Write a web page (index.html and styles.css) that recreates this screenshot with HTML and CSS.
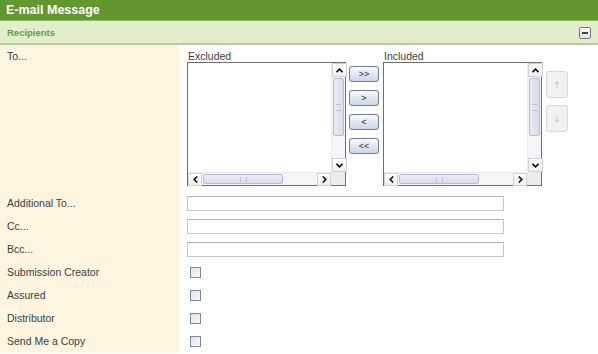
FILE: index.html
```html
<!DOCTYPE html>
<html lang="en">
<head>
    <meta charset="UTF-8">
    <meta name="viewport" content="width=device-width, initial-scale=1.0">
    <title>E-mail Message</title>
    <link rel="stylesheet" href="styles.css">
</head>
<body>
    <div id="panel">
        <div id="panel-title">E-mail Message</div>
        <div id="section-head">
            <span>Recipients</span>
            <button class="collapse"><span></span></button>
        </div>
        <div id="form">
            <div class="row row-to">
                <div class="label">To...</div>
                <div class="field picker">
                    <div class="list-col">
                        <div class="list-title">Excluded</div>
                        <div class="listbox">
                            <div class="list-body"></div>
                            <div class="vscroll">
                                <div class="sb-btn"><svg width="7" height="5" viewBox="0 0 7 5"><path d="M0.5 4.2 L3.5 1.2 L6.5 4.2" fill="none" stroke="#111" stroke-width="1.6"/></svg></div>
                                <div class="sb-track"><div class="vthumb"><i></i></div></div>
                                <div class="sb-btn"><svg width="7" height="5" viewBox="0 0 7 5"><path d="M0.5 0.8 L3.5 3.8 L6.5 0.8" fill="none" stroke="#111" stroke-width="1.6"/></svg></div>
                            </div>
                            <div class="hscroll">
                                <div class="sb-btn"><svg width="5" height="7" viewBox="0 0 5 7"><path d="M4.2 0.5 L1.2 3.5 L4.2 6.5" fill="none" stroke="#111" stroke-width="1.6"/></svg></div>
                                <div class="sb-track"><div class="hthumb"><i></i></div></div>
                                <div class="sb-btn"><svg width="5" height="7" viewBox="0 0 5 7"><path d="M0.8 0.5 L3.8 3.5 L0.8 6.5" fill="none" stroke="#111" stroke-width="1.6"/></svg></div>
                            </div>
                            <div class="corner"></div>
                        </div>
                    </div>
                    <div class="move-buttons">
                        <button class="move">&gt;&gt;</button>
                        <button class="move">&gt;</button>
                        <button class="move">&lt;</button>
                        <button class="move">&lt;&lt;</button>
                    </div>
                    <div class="list-col">
                        <div class="list-title">Included</div>
                        <div class="listbox">
                            <div class="list-body"></div>
                            <div class="vscroll">
                                <div class="sb-btn"><svg width="7" height="5" viewBox="0 0 7 5"><path d="M0.5 4.2 L3.5 1.2 L6.5 4.2" fill="none" stroke="#111" stroke-width="1.6"/></svg></div>
                                <div class="sb-track"><div class="vthumb"><i></i></div></div>
                                <div class="sb-btn"><svg width="7" height="5" viewBox="0 0 7 5"><path d="M0.5 0.8 L3.5 3.8 L6.5 0.8" fill="none" stroke="#111" stroke-width="1.6"/></svg></div>
                            </div>
                            <div class="hscroll">
                                <div class="sb-btn"><svg width="5" height="7" viewBox="0 0 5 7"><path d="M4.2 0.5 L1.2 3.5 L4.2 6.5" fill="none" stroke="#111" stroke-width="1.6"/></svg></div>
                                <div class="sb-track"><div class="hthumb"><i></i></div></div>
                                <div class="sb-btn"><svg width="5" height="7" viewBox="0 0 5 7"><path d="M0.8 0.5 L3.8 3.5 L0.8 6.5" fill="none" stroke="#111" stroke-width="1.6"/></svg></div>
                            </div>
                            <div class="corner"></div>
                        </div>
                    </div>
                    <div class="order-buttons">
                        <button class="order" disabled>&uarr;</button>
                        <button class="order" disabled>&darr;</button>
                    </div>
                </div>
            </div>
            <div class="row">
                <div class="label">Additional To...</div>
                <div class="field"><input type="text" class="text-input"></div>
            </div>
            <div class="row">
                <div class="label">Cc...</div>
                <div class="field"><input type="text" class="text-input"></div>
            </div>
            <div class="row">
                <div class="label">Bcc...</div>
                <div class="field"><input type="text" class="text-input"></div>
            </div>
            <div class="row">
                <div class="label">Submission Creator</div>
                <div class="field"><span class="check"></span></div>
            </div>
            <div class="row">
                <div class="label">Assured</div>
                <div class="field"><span class="check"></span></div>
            </div>
            <div class="row">
                <div class="label">Distributor</div>
                <div class="field"><span class="check"></span></div>
            </div>
            <div class="row">
                <div class="label">Send Me a Copy</div>
                <div class="field"><span class="check"></span></div>
            </div>
        </div>
    </div>
</body>
</html>
```

FILE: styles.css
```css
body {
    margin: 0;
    background: #fff;
    font-family: "Liberation Sans", Arial, sans-serif;
    color: #404040;
}
#panel {
    width: 598px;
}
#panel-title {
    height: 20px;
    line-height: 20px;
    padding-left: 6px;
    background: #64962f;
    border-bottom: 1px solid #8db862;
    color: #fff;
    font-size: 12.5px;
    font-weight: bold;
}
#section-head {
    height: 22px;
    display: flex;
    align-items: center;
    justify-content: space-between;
    padding: 0 7px;
    background: #e2eecb;
    border-bottom: 2px solid #b7cb9f;
    color: #6b9c3c;
    font-size: 9.5px;
    font-weight: bold;
}
.collapse {
    width: 12px;
    height: 12px;
    padding: 0;
    margin-top: 1px;
    display: flex;
    align-items: center;
    justify-content: center;
    border: 1px solid #7a7a7a;
    border-radius: 2px;
    background: linear-gradient(#ffffff, #e4e4e4);
}
.collapse span {
    width: 6px;
    height: 2px;
    background: #444;
}
.row {
    display: flex;
}
.label {
    width: 179px;
    box-sizing: border-box;
    flex: none;
    padding-left: 7px;
    height: 23px;
    line-height: 23px;
    background: #fdf5e0;
    font-size: 10.5px;
}
.row-to .label {
    height: 147px;
    line-height: 13px;
    padding-top: 5px;
}
.field {
    flex: 1;
    padding-left: 8px;
    display: flex;
    align-items: center;
}
.picker {
    align-items: flex-start;
    padding-top: 5px;
}
.list-title {
    font-size: 10.5px;
    line-height: 12px;
    height: 12px;
    padding-left: 1px;
}
.listbox {
    width: 157px;
    height: 122px;
    border: 1px solid #6f6f6f;
    display: grid;
    grid-template-columns: 1fr 14px;
    grid-template-rows: 1fr 13px;
    background: #fff;
}
.vscroll {
    display: flex;
    flex-direction: column;
    background: #f5f5f7;
    border-left: 1px solid #ececf0;
}
.hscroll {
    display: flex;
    background: #f5f5f7;
    border-top: 1px solid #ececf0;
}
.corner {
    background: #ececec;
}
.sb-btn {
    flex: none;
    width: 13px;
    height: 12px;
    display: flex;
    align-items: center;
    justify-content: center;
    background: linear-gradient(#ffffff, #f0f0f2);
    border: 1px solid #cfd1db;
}
.hscroll .sb-btn {
    width: 12px;
    height: 11px;
}
.sb-track {
    flex: 1;
    display: flex;
}
.vscroll .sb-track {
    flex-direction: column;
    padding-top: 1px;
}
.vthumb {
    height: 56px;
    margin: 0 1px;
    background: linear-gradient(90deg, #e9ebf4, #d8dbea);
    border: 1px solid #b8bcd2;
    border-radius: 2px;
    display: flex;
    align-items: center;
    justify-content: center;
}
.vthumb i {
    width: 5px;
    height: 5px;
    border-top: 1px solid #c0c3d3;
    border-bottom: 1px solid #c0c3d3;
}
.hthumb {
    width: 78px;
    margin: 1px 0 1px 1px;
    background: linear-gradient(#eceef6, #d9dcea);
    border: 1px solid #b8bcd2;
    border-radius: 2px;
    display: flex;
    align-items: center;
    justify-content: center;
}
.hthumb i {
    width: 5px;
    height: 5px;
    border-left: 1px solid #c0c3d3;
    border-right: 1px solid #c0c3d3;
}
.move-buttons {
    width: 30px;
    margin: 16px 4px 0 3px;
    display: flex;
    flex-direction: column;
    gap: 8px;
}
.move {
    height: 16px;
    padding: 0;
    border: 1px solid #6b7f9c;
    border-radius: 3px;
    background: linear-gradient(#f7f9fc, #cdd7e6);
    color: #1f2a3a;
    font-family: "Liberation Sans", Arial, sans-serif;
    font-size: 9px;
    line-height: 14px;
}
.order-buttons {
    margin: 21px 0 0 4px;
    display: flex;
    flex-direction: column;
    gap: 7px;
}
.order {
    width: 22px;
    height: 27px;
    padding: 0;
    border: 1px solid #d8d8d8;
    border-radius: 3px;
    background: #f1f1f1;
    color: #c4c4c4;
    font-family: "DejaVu Sans", sans-serif;
    font-size: 9px;
}
.text-input {
    width: 317px;
    height: 15px;
    box-sizing: border-box;
    margin: 0;
    padding: 0 2px;
    border: 1px solid #c8c8c8;
    border-top-color: #b0b0b0;
    background: #fff;
}
.check {
    width: 9px;
    height: 9px;
    margin-left: 3px;
    border: 1px solid #7c8a9b;
    background: linear-gradient(135deg, #dfe3ea, #f7f8fa);
}
```
